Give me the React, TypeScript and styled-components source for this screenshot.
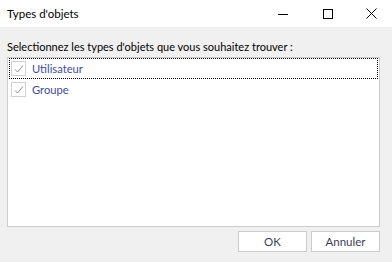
import styled, { createGlobalStyle } from "styled-components";

const GlobalStyle = createGlobalStyle`
  html, body {
    margin: 0;
    padding: 0;
    background: #f0f0f0;
  }
  body {
    font-family: Lato, "Noto Sans", sans-serif;
    font-size: 11px;
  }
`;

const Window = styled.div`
  width: 392px;
  height: 262px;
  display: flex;
  flex-direction: column;
  background: #f0f0f0;
  overflow: hidden;
`;

const TitleBar = styled.div`
  height: 27px;
  background: #ffffff;
  display: flex;
  align-items: center;
  padding-left: 7px;
`;

const Title = styled.div`
  flex: 1;
  color: #000;
  font-size: 11.5px;
`;

const CaptionButton = styled.div`
  width: 45px;
  height: 27px;
  display: flex;
  align-items: center;
  justify-content: center;
  &:last-child {
    width: 42px;
  }
`;

const Body = styled.div`
  flex: 1;
  display: flex;
  flex-direction: column;
  padding: 12px 12px 10px 7px;
`;

const Prompt = styled.div`
  color: #000;
  height: 18px;
  line-height: 16px;
  font-size: 11px;
`;

const ListBox = styled.div`
  height: 168px;
  background: #fff;
  border: 1px solid #cccccc;
  display: flex;
  flex-direction: column;
`;

const Row = styled.div<{ $focused?: boolean }>`
  height: 19px;
  margin: 0 1px;
  display: flex;
  align-items: center;
  gap: 6px;
  padding-left: 1px;
  border: 1px dotted ${(p) => (p.$focused ? "#000" : "transparent")};
  color: #3d4c9e;
  font-size: 11.2px;
`;

const Check = styled.div`
  width: 15px;
  height: 15px;
  box-sizing: border-box;
  border: 1px solid #d0d0d0;
  display: flex;
  align-items: center;
  justify-content: center;
`;

const Footer = styled.div`
  display: flex;
  justify-content: flex-end;
  gap: 4px;
  margin-top: 4px;
`;

const Button = styled.button`
  width: 69px;
  height: 21px;
  background: #fff;
  border: 1px solid #cccccc;
  font-family: inherit;
  font-size: 11.5px;
  color: #3c3c5a;
  padding: 0;
`;

const items = ["Utilisateur", "Groupe"];

const App = () => {
  return (
    <Window>
      <GlobalStyle />
      <TitleBar>
        <Title>Types d'objets</Title>
        <CaptionButton>
          <svg width="10" height="10" viewBox="0 0 10 10">
            <path d="M0 5.5h10" stroke="#000" strokeWidth="1" />
          </svg>
        </CaptionButton>
        <CaptionButton>
          <svg width="10" height="10" viewBox="0 0 10 10">
            <rect x="0.5" y="0.5" width="9" height="9" fill="none" stroke="#000" />
          </svg>
        </CaptionButton>
        <CaptionButton>
          <svg width="11" height="11" viewBox="0 0 11 11">
            <path d="M0.5 0.5l10 10M10.5 0.5l-10 10" stroke="#000" strokeWidth="1" />
          </svg>
        </CaptionButton>
      </TitleBar>
      <Body>
        <Prompt>Selectionnez les types d'objets que vous souhaitez trouver :</Prompt>
        <ListBox>
          {items.map((item, index) => (
            <Row key={item} $focused={index === 0}>
              <Check>
                <svg width="10" height="10" viewBox="0 0 10 10">
                  <path d="M1 5.5l2.5 2.5L9 1.5" fill="none" stroke="#8c8c8c" strokeWidth="1" />
                </svg>
              </Check>
              {item}
            </Row>
          ))}
        </ListBox>
        <Footer>
          <Button>OK</Button>
          <Button>Annuler</Button>
        </Footer>
      </Body>
    </Window>
  );
};

export default App;
